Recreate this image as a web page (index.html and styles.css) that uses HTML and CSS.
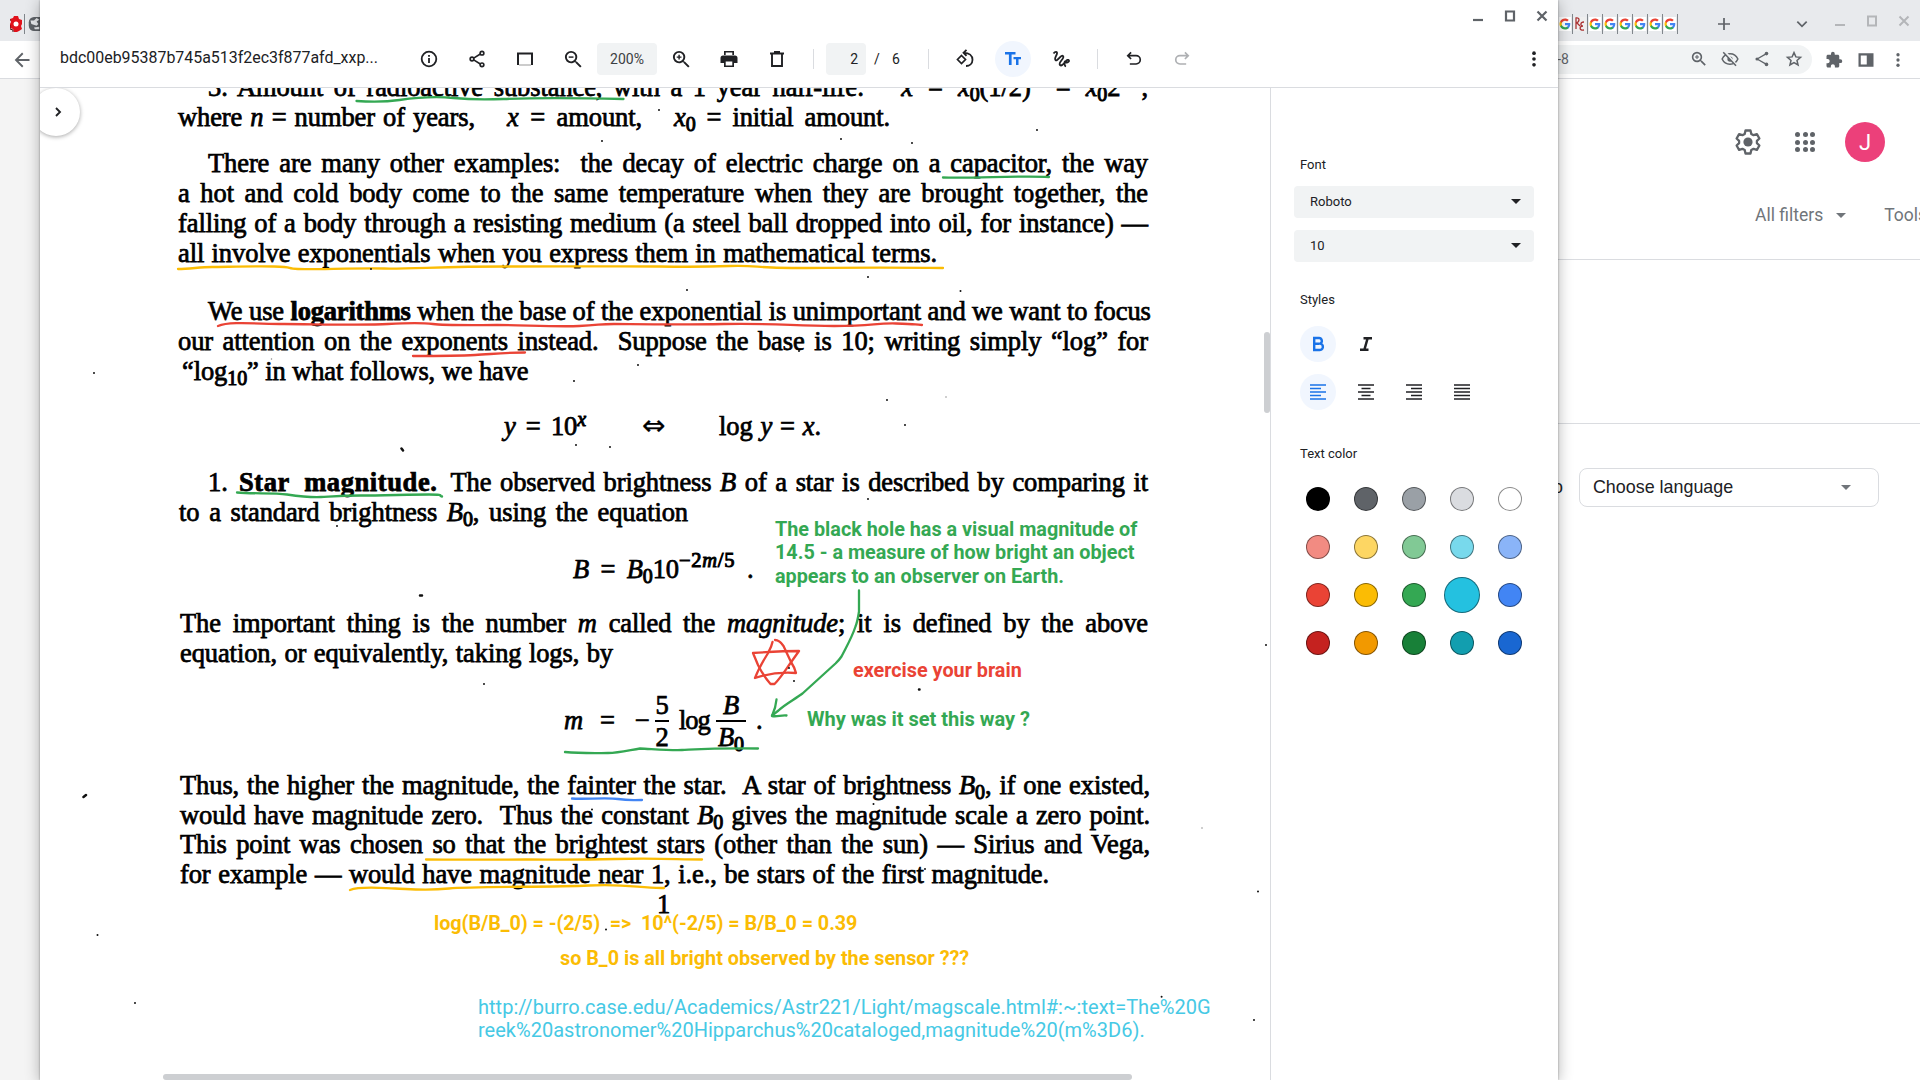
FILE: index.html
```html
<!DOCTYPE html>
<html lang="en">
<head>
<meta charset="utf-8">
<title>Gallery</title>
<link rel="stylesheet" href="styles.css">
</head>
<body>
<svg class="defs" aria-hidden="true">
  <symbol id="g" viewBox="0 0 24 24"><path fill="#4285f4" d="M22.6 12.2c0-.8-.1-1.500-.2-2.200H12v4.300h5.900c-.3 1.400-1 2.500-2.200 3.300v2.800h3.600c2.100-1.900 3.300-4.800 3.300-8.200z"/><path fill="#34a853" d="M12 23c3 0 5.500-1 7.300-2.700l-3.600-2.800c-1 .7-2.200 1.100-3.700 1.100-2.900 0-5.300-1.900-6.200-4.500H2.200v2.800C4 20.500 7.700 23 12 23z"/><path fill="#fbbc05" d="M5.800 14.100c-.2-.7-.3-1.400-.3-2.100s.1-1.400.3-2.100V7.100H2.200C1.400 8.600 1 10.200 1 12s.4 3.400 1.200 4.900z"/><path fill="#ea4335" d="M12 5.400c1.600 0 3.100.6 4.200 1.600l3.200-3.200C17.500 2.100 15 1 12 1 7.700 1 4 3.500 2.200 7.100l3.600 2.800C6.700 7.300 9.100 5.400 12 5.400z"/></symbol>
  <symbol id="share-line" viewBox="0 0 24 24"><g stroke="currentColor" stroke-width="2" fill="none"><path d="m8 11 8-5M8 13l8 5"/><circle cx="6" cy="12" r="2.200"/><circle cx="18" cy="5" r="2.200"/><circle cx="18" cy="19" r="2.200"/></g></symbol>
  <symbol id="dots" viewBox="0 0 24 24"><circle cx="12" cy="5" r="2.200"/><circle cx="12" cy="12" r="2.200"/><circle cx="12" cy="19" r="2.200"/></symbol>
  <symbol id="lens" viewBox="0 0 24 24"><path d="M15.500 14h-.79l-.28-.27A6.470 6.470 0 0 0 16 9.500 6.500 6.500 0 1 0 9.500 16c1.610 0 3.090-.59 4.230-1.570l.27.28v.79l5 4.990L20.490 19l-4.990-5zm-6 0C7.010 14 5 11.990 5 9.500S7.010 5 9.500 5 14 7.010 14 9.500 11.990 14 9.500 14z"/></symbol>
  <symbol id="undo" viewBox="0 0 24 24"><path d="M8.500 4 4.500 8l4 4M5 8h9.500a4.500 4.500 0 0 1 0 10H7" fill="none" stroke="currentColor" stroke-width="2"/></symbol>
</svg>

<div class="browser">
  <div class="tabs">
    <div class="tabs-left">
      <svg class="fav-red" viewBox="0 0 12 16"><path fill="#e0121b" d="M4 0h4l1 3 3 1v4l-1 2 1 3-3 2-2 1H4l-1-3-3-1V8l1-2-1-3 3-1z"/><circle cx="6" cy="8" r="2.500" fill="#fff"/><path d="M0 9v4l3 1v2M0 5v-2" stroke="#511" fill="none"/></svg>
      <i class="bar"></i>
      <svg class="fav-globe" viewBox="0 0 12 16"><rect width="18" height="16" rx="6" fill="#5f6368"/><path d="M2 4h4l3-3 3 2-3 2 2 3-2 2-6-2zM6 12l6-1v3H7z" fill="#e8eaed"/></svg>
    </div>
    <div class="tabs-right">
      <svg class="fav"><use href="#g"/></svg><i class="bar"></i>
      <svg class="fav fav-re" viewBox="0 0 10 14"><path d="M1 12V1c4-1 4 4 0 5M2 6l3 3M9 5c-4 0-4 4-1 4-4 0-4 5 1 4" fill="none" stroke="#a33" stroke-width="1.300"/></svg><i class="bar"></i>
      <svg class="fav"><use href="#g"/></svg><i class="bar"></i>
      <svg class="fav"><use href="#g"/></svg><i class="bar"></i>
      <svg class="fav"><use href="#g"/></svg><i class="bar"></i>
      <svg class="fav"><use href="#g"/></svg><i class="bar"></i>
      <svg class="fav"><use href="#g"/></svg><i class="bar"></i>
      <svg class="fav"><use href="#g"/></svg><i class="bar"></i>
      <svg class="tab-ico new-tab" viewBox="0 0 24 24"><path d="M12 3v18M3 12h18" stroke="#5f6368" stroke-width="2.600"/></svg>
      <svg class="tab-ico tab-search" viewBox="0 0 24 24"><path d="m4 8 8 8 8-8" fill="none" stroke="#5f6368" stroke-width="3"/></svg>
      <svg class="tab-ico dim first" viewBox="0 0 16 16"><path d="M3 12h10" stroke-width="2"/></svg>
      <svg class="tab-ico dim" viewBox="0 0 16 16"><path d="M4 3.500h8v9H4z" stroke-width="2"/></svg>
      <svg class="tab-ico dim" viewBox="0 0 16 16"><path d="m3.500 3.500 9 9m0-9-9 9" stroke-width="2"/></svg>
    </div>
  </div>
  <div class="nav">
    <svg class="back" viewBox="0 0 24 24"><path d="M22 12H4m9-9-9 9 9 9" fill="none" stroke="#5f6368" stroke-width="2.500"/></svg>
    <div class="omnibox">
      <span class="url">-8</span>
      <svg><use href="#lens"/><path d="M9.500 7v5M7 9.500h5" stroke="currentColor" stroke-width="1.300"/></svg>
      <svg viewBox="0 0 24 24"><path d="M1.500 12C3.500 7.500 7.500 5 12 5s8.500 2.500 10.500 7c-2 4.500-6 7-10.500 7S3.500 16.500 1.500 12z" fill="none" stroke="currentColor" stroke-width="2"/><circle cx="12" cy="12" r="3.500"/><path d="m5 2 16 19" stroke="#f1f3f4" stroke-width="3"/><path d="m3 3 17 18" stroke="currentColor" stroke-width="2"/></svg>
      <svg class="thin-share" viewBox="0 0 20 20"><path d="M4.500 10 15 4M4.500 10 15 16" stroke="currentColor" stroke-width="1.500"/><circle cx="4.500" cy="10" r="1.800"/><circle cx="15" cy="4" r="2"/><circle cx="15" cy="16" r="2"/></svg>
      <svg viewBox="0 0 24 24"><path d="m12 3.500 2.500 5.700 6.200.6-4.700 4.100 1.400 6.100-5.400-3.200L6.600 20 8 13.900 3.300 9.800l6.200-.6z" fill="none" stroke="currentColor" stroke-width="2"/></svg>
    </div>
    <div class="ext">
      <svg viewBox="0 0 24 24"><path d="M20.500 11H19V7c0-1.100-.9-2-2-2h-4V3.500a2.500 2.500 0 0 0-5 0V5H4c-1.100 0-1.990.9-1.990 2v3.800H3.500c1.490 0 2.700 1.210 2.700 2.700S4.990 16.200 3.500 16.200H2V20c0 1.100.9 2 2 2h3.800v-1.500c0-1.490 1.210-2.700 2.700-2.700s2.700 1.210 2.700 2.700V22H17c1.100 0 2-.9 2-2v-4h1.500a2.500 2.500 0 0 0 0-5z"/></svg>
      <svg viewBox="0 0 24 24"><path d="M3.500 4.500h17v15h-17z" fill="none" stroke="currentColor" stroke-width="3"/><path d="M13 4h7v16h-7z"/></svg>
      <svg><use href="#dots"/></svg>
    </div>
  </div>
  <div class="page">
    <div class="account">
      <svg class="gear" viewBox="0 0 26 26"><path d="M10.500 1.500h5l.8 3.400 2.300 1.300 3.300-1 2.500 4.300-2.500 2.400v2.200l2.500 2.400-2.500 4.300-3.300-1-2.300 1.300-.8 3.400h-5l-.8-3.400-2.300-1.300-3.300 1-2.500-4.300 2.500-2.400v-2.200L1.600 9.500l2.500-4.300 3.300 1 2.300-1.300z" fill="none" stroke="#5f6368" stroke-width="2.300" stroke-linejoin="round"/><circle cx="13" cy="13" r="4.600" fill="#5f6368"/></svg>
      <div class="apps"><i></i><i></i><i></i><i></i><i></i><i></i><i></i><i></i><i></i></div>
      <div class="avatar">J</div>
    </div>
    <div class="filters"><span>All filters</span><i class="tri"></i><b></b><span>Tools</span></div>
    <div class="band"></div>
    <div class="language"><span>o</span><div class="choose">Choose language<i class="tri"></i></div></div>
  </div>
</div>

<div class="window">
  <div class="titlebar">
    <svg viewBox="0 0 16 16"><path d="M3 12h10"/></svg>
    <svg viewBox="0 0 16 16"><path d="M4 3.500h8v9H4z"/></svg>
    <svg viewBox="0 0 16 16"><path d="m3.500 3.500 9 9m0-9-9 9"/></svg>
  </div>
  <div class="toolbar">
    <span class="filename">bdc00eb95387b745a513f2ec3f877afd_xxp...</span>
    <span class="tool"><svg viewBox="0 0 20 20"><circle cx="10" cy="10" r="7.300" fill="none" stroke="currentColor" stroke-width="1.800"/><path d="M9.100 9h1.800v5H9.100zM9.100 6h1.800v1.800H9.100z"/></svg></span>
    <span class="tool"><svg><use href="#share-line"/></svg></span>
    <span class="tool"><svg viewBox="0 0 20 20"><path d="M3 16V4.500h14V16" fill="none" stroke="currentColor" stroke-width="2"/><path d="M4 16h12" stroke="#999"/></svg></span>
    <span class="tool"><svg viewBox="1 1 21 21"><use href="#lens" width="24" height="24"/><path d="M7 9.500h5" stroke="currentColor" stroke-width="1.500"/></svg></span>
    <span class="zoom">200%</span>
    <span class="tool"><svg viewBox="1 1 21 21"><use href="#lens" width="24" height="24"/><path d="M9.500 7v5M7 9.500h5" stroke="currentColor" stroke-width="1.500"/></svg></span>
    <span class="tool"><svg viewBox="0 0 20 20"><path d="M5 2h10v4H5zM4 6.500h12a2.500 2.500 0 0 1 2.500 2.500v5H15v4H5v-4H1.500V9A2.500 2.500 0 0 1 4 6.500z"/><path d="M6.700 3.600h6.600V6H6.700zM6.700 12.500h6.600v4H6.700z" fill="#fff"/></svg></span>
    <span class="tool"><svg viewBox="0 0 20 20"><path d="M5 4.500h10V17H5zM3 4.500h14M7 3h6" fill="none" stroke="currentColor" stroke-width="1.900"/></svg></span>
    <i class="sep s1"></i>
    <span class="pageno">2</span><span class="slash">/</span><span class="total">6</span>
    <i class="sep s2"></i>
    <span class="tool"><svg viewBox="0 0 20 20"><path d="m6.500 6.500 4 4-4 4-4-4z" fill="none" stroke="currentColor" stroke-width="1.700"/><path d="m11.500.8-3 3 3 3M9 3.800c5 0 8.500 2.500 8.500 6.900 0 4-3 6.300-6.500 6.300" fill="none" stroke="currentColor" stroke-width="1.800"/></svg></span>
    <span class="tool active"><svg viewBox="0 0 20 20"><path d="M2 3h10.500v2.600H8.600V16H5.900V5.600H2zM10.500 8H18v2.300h-2.500V16H13v-5.700h-2.500z"/></svg></span>
    <span class="tool"><svg viewBox="0 0 20 20"><path d="M2.500 4.500C4 2.500 6.500 2 6 4.500S3 9.500 4.500 11s4-3 6-4 2.500 1 1 3-4 4.500-2.500 6 3.500-1 5-3 3.500-3 4-1.500-2 2-3.500 2M14 12c-1 2-.5 5 1 5.500" fill="none" stroke="currentColor" stroke-width="1.800"/></svg></span>
    <i class="sep s3"></i>
    <span class="tool"><svg><use href="#undo"/></svg></span>
    <span class="tool off"><svg class="flip"><use href="#undo"/></svg></span>
    <span class="tool more"><svg><use href="#dots"/></svg></span>
  </div>
  <div class="body">
    <div class="doc">
      <div class="sheet">
        <p class="p1">
          <span class="line indent"><span class="w-a1">3. Amount of radioactive substance, with a 1 year half-life:</span><span class="w-a2"><em>x</em> = <em>x</em><sub>0</sub>(1/2)<sup><em>n</em></sup> = <em>x</em><sub>0</sub>2<sup>−<em>n</em></sup>,</span></span>
          <span class="line"><span class="w-b1">where <em>n</em> = number of years,</span><span class="w-b2"><em>x</em> = amount,</span><span class="w-b3"><em>x</em><sub>0</sub> = initial amount.</span></span>
        </p>
        <p class="p2">
          <span class="line indent">There are many other examples: &nbsp;the decay of electric charge on a capacitor, the way</span>
          <span class="line">a hot and cold body come to the same temperature when they are brought together, the</span>
          <span class="line">falling of a body through a resisting medium (a steel ball dropped into oil, for instance) —</span>
          <span class="line w-terms">all involve exponentials when you express them in mathematical terms.</span>
        </p>
        <p class="p3">
          <span class="line indent">We use <b class="w-logs">logarithms</b> when the base of the exponential is unimportant and we want to focus</span>
          <span class="line">our attention on the exponents instead. &nbsp;Suppose the base is 10; writing simply “log” for</span>
          <span class="line w-log">“log<sub>10</sub>” in what follows, we have</span>
        </p>
        <div class="eq e1"><span class="w-y"><em>y</em> = 10<sup><em>x</em></sup></span><span class="w-iff">⇔</span><span class="w-logy">log <em>y</em> = <em>x</em>.</span></div>
        <p class="p4">
          <span class="line indent"><span class="w-one">1.</span><b class="w-star">Star magnitude.</b><span class="w-obs">The observed brightness <em>B</em> of a star is described by comparing it</span></span>
          <span class="line w-std">to a standard brightness <em>B</em><sub>0</sub>, using the equation</span>
        </p>
        <div class="eq e2"><span class="w-bb"><em>B</em> = <em>B</em><sub>0</sub>10</span><sup class="w-exp">−2<em>m</em>/5</sup><span>.</span></div>
        <p class="p5">
          <span class="line">The important thing is the number <em>m</em> called the <em>magnitude</em>; it is defined by the above</span>
          <span class="line w-eqv">equation, or equivalently, taking logs, by</span>
        </p>
        <div class="eq e3"><em class="w-m">m</em><span class="w-eq">=</span><span class="w-minus">−</span><span class="frac f1"><span>5</span><span>2</span></span><span class="w-lg">log</span><span class="frac f2"><em>B</em><span><em>B</em><sub>0</sub></span></span><span>.</span></div>
        <p class="p6">
          <span class="line">Thus, the higher the magnitude, the fainter the star. &nbsp;A star of brightness <em>B</em><sub>0</sub>, if one existed,</span>
          <span class="line">would have magnitude zero. &nbsp;Thus the constant <em>B</em><sub>0</sub> gives the magnitude scale a zero point.</span>
          <span class="line">This point was chosen so that the brightest stars (other than the sun) — Sirius and Vega,</span>
          <span class="line w-first">for example — would have magnitude near 1, i.e., be stars of the first magnitude.</span>
        </p>
        <div class="folio">1</div>
      </div>

      <svg class="ink" viewBox="40 88 1230 992">
        <g fill="none" stroke-width="2.300" stroke-linecap="round" stroke-linejoin="round">
          <g stroke="#34a853">
            <path d="M356.500 101c14 1 29 1 43-1s34-4 54-2 28 2 50 1 80-1 120 0"/>
            <path d="M943 177.500c30 1 76-2 106-.5"/>
            <path d="M237 492.500c18 1.500 36 0 50 2s24 3 34 2.500 20-1.500 40-1.500 50-1 68-1 8 1 13 2"/>
            <path d="M565 752c16 1.500 32 1 43 1s22-3 32-4.500c12 .5 30 2 42 1.500s30-2 76-1.500"/>
            <path d="M859 590.500v21c-1 6-1.500 10-3.500 15-4 12-9 20-14 30-2 3-3 4-6 7l-33 30c-8 6-18 11-24 17l-6.500 5"/>
            <path d="M776.500 699.500c-.5 6-2 11-4.500 16.500 5 1 9-1 14.500-.5"/>
          </g>
          <g stroke="#fbbc04">
            <path d="M178 269c12 0 22-2 34-2s40-1 62-.5 10 2 24 2.500 60-1 86-.5 60-2 120-2 130-.5 156 0 44 .5 70-.5 26 2 62 2 80-1 151 0"/>
            <path d="M426 859.500c40 .5 70 0 100 0s45 .5 90-.5 60 .5 86 .5"/>
            <path d="M350 890c10-4 30-2 45-1.500s30 2.500 54 0 100-1 140-3 50 3 75 2.500"/>
          </g>
          <g stroke="#ea4335">
            <path d="M218 326c12-5 40-2 66-2s80 1.500 104 0 34-1.500 45 0 40 1 64 1 60 2 82 1 20-2 35-2 60 1 110 0 70 2 110 2 40-3 62-2.500 16 1 26 1.500"/>
            <path d="M413 356c20 0 44 0 62-1s30-2.500 50-2.500"/>
            <path d="M772.500 642c-1 5-3 8-5 12-5 8-9 15-12.500 24 12-4 28-6 41-5-1-4-3-8-5-11l-7.500-16c-2-3-5-6-8.500-6"/>
            <path d="M799 651c-16 0-31 1-46 2l5 12c4 8 7 13 12.500 19h4c6-6 11-14 16-21l8.500-12z"/>
          </g>
          <path stroke="#4285f4" d="M572 798.500c10 1 36-1 46 .5s12 1 24 1"/>
        </g>
        <path d="M659 110h0M602 141h0M841 139h0M912 143h0M1037 130h0M371 269h0M638 365h0M574 381h0M868 277h0M687 290h0M960.500 291h0M799 351h0M576 445h0M610 447h0M337 526h0M484 684h0M887 400h0M905 425h0M868 499h0M794 681h0M789 668h0M1266 645h0M97.500 935h0M135 1003h0M94 373h0M873.500 804h0M1258 891.500h0M1161.600 996.700h0M1254 1020h0M592 809.500h0M925 869h0M606 929.500h0" stroke="#111" stroke-width="2" stroke-linecap="round"/>
        <path d="M401.500 448.500l1.500 2M420 595.500h2M919 689.500h.5M83.500 797l2.500-2" stroke="#111" stroke-width="2.500" stroke-linecap="round"/>
        <path d="M946 397h0M1202 828h0M271.500 359h0" stroke="#888" stroke-width="1.500" stroke-linecap="round"/>
      </svg>

      <div class="note green n1">The black hole has a visual magnitude of<br>14.5 - a measure of how bright an object<br>appears to an observer on Earth.</div>
      <div class="note red n2">exercise your brain</div>
      <div class="note green n3">Why was it set this way ?</div>
      <div class="note yellow n4">log(B/B_0) = -(2/5)&nbsp; =&gt;&nbsp; 10^(-2/5) = B/B_0 = 0.39</div>
      <div class="note yellow n5">so B_0 is all bright observed by the sensor ???</div>
      <div class="note cyan n6">http://burro.case.edu/Academics/Astr221/Light/magscale.html#:~:text=The%20G<br>reek%20astronomer%20Hipparchus%20cataloged,magnitude%20(m%3D6).</div>

      <div class="drawer"><svg viewBox="0 0 24 24"><path d="m9 6 6 6-6 6" fill="none" stroke="#202124" stroke-width="2.800"/></svg></div>
      <div class="thumb-v"></div>
      <div class="thumb-h"></div>
    </div>
    <div class="panel">
      <h2>Font</h2>
      <div class="select">Roboto<i class="tri"></i></div>
      <div class="select">10<i class="tri"></i></div>
      <h2 class="h-styles">Styles</h2>
      <div class="opts">
        <span class="opt on"><svg viewBox="0 0 20 20"><path d="M6.200 4h4.500a2.900 2.900 0 0 1 1.500 5.500A3.100 3.100 0 0 1 11 16H6.200z M6.200 9.700h5" fill="none" stroke="currentColor" stroke-width="2.400"/></svg></span>
        <span class="opt"><svg viewBox="0 0 20 20"><path d="M7.500 4.200H16M4 15.800h8.500M11.700 4 8.300 16" fill="none" stroke="currentColor" stroke-width="2.500"/></svg></span>
      </div>
      <div class="opts">
        <span class="opt on"><svg viewBox="0 0 16 16"><path d="M0 1h16M0 4.500h11M0 8h16M0 11.500h11M0 15h16"/></svg></span>
        <span class="opt"><svg viewBox="0 0 16 16"><path d="M0 1h16M3.500 4.500h9M0 8h16M3.500 11.500h9M0 15h16"/></svg></span>
        <span class="opt"><svg viewBox="0 0 16 16"><path d="M0 1h16M5 4.500h11M0 8h16M5 11.500h11M0 15h16"/></svg></span>
        <span class="opt"><svg viewBox="0 0 16 16"><path d="M0 1h16M0 4.500h16M0 8h16M0 11.500h16M0 15h16"/></svg></span>
      </div>
      <h2 class="h-color">Text color</h2>
      <div class="swatches">
        <i class="c1"></i><i class="c2"></i><i class="c3"></i><i class="c4"></i><i class="c5"></i>
        <i class="c6"></i><i class="c7"></i><i class="c8"></i><i class="c9"></i><i class="c10"></i>
        <i class="c11"></i><i class="c12"></i><i class="c13"></i><i class="c14 picked"></i><i class="c15"></i>
        <i class="c16"></i><i class="c17"></i><i class="c18"></i><i class="c19"></i><i class="c20"></i>
      </div>
    </div>
  </div>
</div>
</body>
</html>
```
FILE: styles.css
```css
* { box-sizing: border-box; }
body { margin: 0; width: 1920px; height: 1080px; overflow: hidden; position: relative; background: #fff; font-family: Roboto, sans-serif; color: #202124; }
svg { fill: currentColor; display: block; flex: none; }
i { font-style: normal; }
.defs { position: absolute; width: 0; height: 0; }
.tri { width: 0; height: 0; border: 5px solid transparent; border-top-color: currentColor; border-bottom: 0; }

/* browser behind */
.browser { display: flex; flex-direction: column; height: 1080px; color: #5f6368; }
.tabs { height: 41px; background: #e8eaed; display: flex; justify-content: space-between; padding-top: 7px; }
.tabs-left, .tabs-right { display: flex; align-items: center; height: 34px; }
.tabs-left { padding-left: 10px; }
.bar { width: 1px; height: 20px; background: #80868b; flex: none; }
.fav-red { width: 12px; height: 16px; margin-right: 2px; }
.fav-globe { width: 12px; height: 14px; margin-left: 3px; }
.tabs-right { width: 362px; }
.fav { width: 12px; height: 14px; margin: 0 1px 0 1px; background: #fff; }
.fav-re { background: #eee; }
.tab-ico { width: 16px; height: 16px; }
.new-tab { margin-left: 38px; }
.tab-search { width: 14px; height: 14px; margin-left: 63px; }
.dim { fill: none; stroke: #b4b6b9; margin: 0 0 6px 16px; }
.dim.first { margin-left: 23px; }
.nav { height: 38px; border-bottom: 1px solid #dadce0; display: flex; align-items: center; background: #fff; }
.back { width: 18px; height: 18px; margin-left: 13px; }
.omnibox { width: 1757px; margin-left: 24px; height: 29px; border-radius: 15px; background: #f1f3f4; display: flex; align-items: center; justify-content: flex-end; gap: 14px; padding-right: 9px; margin-top: -1px; }
.omnibox svg { width: 18px; height: 18px; overflow: visible; }
.omnibox svg:nth-of-type(1) { width: 24px; height: 24px; transform: scale(.8); margin-right: -4px; transform-origin: 12px 12px; }
.url { margin-right: 104px; font-size: 14px; }
.ext { display: flex; gap: 14px; padding-left: 13px; }
.ext svg { width: 18px; height: 18px; }
.page { flex: 1; display: flex; flex-direction: column; align-items: flex-end; background: linear-gradient(90deg, #f4f4f4 40px, #fff 40px); }
.account { display: flex; align-items: center; height: 40px; margin-top: 43px; padding-right: 35px; }
.gear { width: 26px; height: 26px; }
.apps { display: grid; grid-template-columns: repeat(3, 5px); gap: 2.500px; margin-left: 34px; }
.apps i { width: 5px; height: 5px; border-radius: 50%; background: #5f6368; }
.avatar { width: 40px; height: 40px; border-radius: 50%; background: #ec407a; color: #fff; font-size: 22px; display: flex; align-items: center; justify-content: center; margin-left: 30px; }
.filters { display: flex; align-items: center; width: 165px; height: 26px; margin-top: 40px; font-size: 17.500px; color: #70757a; white-space: nowrap; }
.filters span:last-child { margin-left: 15px; }
.filters .tri { margin-left: 13px; }
.filters b { width: 1px; height: 25px; background: #dadce0; margin-left: 23px; }
.band { width: 362px; height: 165px; border: solid #dadce0; border-width: 1px 0; margin-top: 31px; }
.language { display: flex; align-items: center; width: 367px; margin-top: 44px; font: 17.900px "Liberation Sans", sans-serif; color: #202124; }
.choose { width: 300px; height: 39px; border: 1px solid #dadce0; border-radius: 8px; margin-left: 16px; padding: 0 27px 0 13px; display: flex; align-items: center; justify-content: space-between; }
.choose .tri { color: #70757a; }

/* viewer window */
.window { position: absolute; left: 40px; top: 0; width: 1518px; height: 1080px; background: #fff; box-shadow: 0 2px 14px rgba(0,0,0,.3), 0 0 2px rgba(0,0,0,.35); display: flex; flex-direction: column; }
.titlebar { height: 32px; display: flex; justify-content: flex-end; align-items: center; gap: 16px; padding-right: 8px; }
.titlebar svg { width: 16px; height: 16px; fill: none; stroke: #5f6368; stroke-width: 2.200; }
.toolbar { height: 56px; border-bottom: 1px solid #dadce0; display: flex; align-items: center; padding: 0 6px 2px 20px; }
.filename { font-size: 15.950px; width: 351px; white-space: nowrap; padding-bottom: 3px; }
.tool { width: 36px; height: 36px; margin-right: 12px; border-radius: 50%; display: flex; align-items: center; justify-content: center; flex: none; }
.tool svg { width: 20px; height: 20px; }
.tool.active { background: #f1f6fe; color: #1a73e8; }
.tool.off { color: #aeb0b3; }
.flip { transform: scaleX(-1); }
.tool.more { margin: 0 0 0 auto; }
.zoom { width: 60px; height: 32px; margin: 0 6px; background: #f1f3f4; border-radius: 4px; font-size: 14px; display: flex; align-items: center; justify-content: center; flex: none; color: #3c4043; }
.tool + .zoom { margin-left: -6px; }
.sep { width: 1px; height: 20px; background: #dadce0; flex: none; }
.s1 { margin-left: 6px; }
.pageno { width: 40px; height: 32px; margin-left: 12px; padding-right: 8px; background: #f1f3f4; border-radius: 4px; display: flex; align-items: center; justify-content: flex-end; font-size: 14px; flex: none; }
.slash, .total { font-size: 14px; }
.slash { margin-left: 8px; width: 18px; }
.total { width: 36px; }
.s2 { margin-right: 18px; }
.s3 { margin: 0 18px 0 6px; }
.body { flex: 1; display: flex; min-height: 0; }
.doc { width: 1230px; position: relative; overflow: hidden; }

/* scanned sheet */
.sheet { width: 1110px; padding-left: 138px; font: 26.500px/30px "Liberation Serif", "DejaVu Sans", serif; letter-spacing: -.1px; color: #000; -webkit-text-stroke: .75px #000; }
.sheet p { margin: 0; width: 970px; }
.line, .line > span, .w-star { display: block; text-align-last: justify; white-space: nowrap; }
.line { height: 30px; }
.line:has(> span) { display: flex; }
.indent { margin-left: 30px; }
.sheet sub, .sheet sup { font-size: 20px; line-height: 0; -webkit-text-stroke-width: 1px; }
.sheet sub { vertical-align: -5px; }
.sheet sup { vertical-align: 9px; }
.sheet .p1 { margin-top: -16px; }
.sheet .p2 { margin-top: 16px; }
.sheet .p3 { margin-top: 28px; }
.sheet .p4 { margin-top: 26px; }
.sheet .p5 { margin-top: 24px; }
.sheet .p6 { margin: 36px 0 0 2px; line-height: 29.600px; }
.p6 .line { height: 29.600px; }
.w-a1 { width: 657px; }
.w-a2 { width: 247px; margin-left: 37px; }
.w-b1 { width: 297px; }
.w-b2 { width: 135px; margin-left: 32px; }
.w-b3 { width: 216px; margin-left: 32px; }
.w-terms { width: 759px; }
.w-logs { letter-spacing: -.2px; }
.w-log { width: 342px; margin-left: 4px; }
.w-one { width: 20px; }
.w-star { width: 199px; margin-left: 11px; letter-spacing: .6px; }
.w-obs { width: 699px; margin-left: 13px; }
.w-std { width: 509px; margin-left: 1px; }
.w-eqv { width: 433px; }
.w-first { width: 869px; }
.p5 { padding-left: 2px; }
.eq { display: flex; height: 30px; align-items: center; white-space: nowrap; }
.eq > * { text-align-last: justify; flex: none; }
.e1 { margin: 25px 0 0 326px; }
.w-y { width: 82px; }
.w-iff { width: 23px; margin-left: 56px; font: 28px/30px "DejaVu Sans", sans-serif; -webkit-text-stroke-width: .3px; }
.w-logy { width: 102px; margin-left: 54px; }
.e2 { margin: 27px 0 0 395px; }
.w-bb { width: 106px; }
.sheet .w-exp { width: 60px; margin: -18px 8px 0 0; letter-spacing: .7px; font-size: 20.500px; }
.e3 { margin: 37px 0 0 386px; }
.w-m { width: 22px; }
.w-eq { width: 20px; margin-left: 14px; }
.w-minus { width: 18px; margin-left: 15px; }
.frac { display: flex; flex-direction: column; align-items: center; margin-top: 1px; }
.frac > :first-child { height: 32px; border-bottom: 2px solid #000; text-align: center; text-align-last: center; }
.f1 { width: 14px; margin-left: 2px; }
.f1 > :first-child { width: 14px; }
.w-lg { width: 31px; margin-left: 10px; letter-spacing: -1px; }
.f2 { width: 30px; margin: 1px 10px 0 6px; }
.f2 > :first-child { width: 30px; }
.folio { padding-left: 479px; }

/* annotations */
.ink { position: absolute; left: 0; top: 0; width: 1230px; height: 992px; }
.note { position: absolute; font-size: 19.800px; line-height: 23.400px; white-space: nowrap; font-weight: 700; }
.green { color: #34a853; }
.red { color: #ea4335; }
.yellow { color: #fbbc04; }
.cyan { color: #46c9e5; font-weight: 400; }
.n1 { left: 735px; top: 430px; }
.n2 { left: 813px; top: 571px; }
.n3 { left: 767px; top: 620px; font-size: 20px; }
.n4 { left: 394px; top: 824px; letter-spacing: -.06px; }
.n5 { left: 520px; top: 859px; }
.n6 { left: 438px; top: 908px; font-size: 20px; letter-spacing: .02px; }
.drawer { position: absolute; left: -8px; top: 0; width: 48px; height: 48px; border-radius: 50%; background: #fff; box-shadow: 0 1px 4px rgba(0,0,0,.35); display: flex; align-items: center; justify-content: center; }
.drawer svg { width: 16px; height: 16px; margin-left: 3px; }
.thumb-v { position: absolute; right: 0; top: 244px; width: 6px; height: 81px; border-radius: 3px; background: #cdcfd2; }
.thumb-h { position: absolute; left: 123px; bottom: 0; width: 969px; height: 6px; border-radius: 3px; background: #cdcfd2; }

/* side panel */
.panel { width: 288px; border-left: 1px solid #dadce0; padding: 67px 24px 0 23px; }
.panel h2 { margin: 0 0 12px 6px; font-size: 13px; line-height: 19px; font-weight: 400; }
.select { height: 32px; margin-bottom: 12px; padding: 0 13px 1px 16px; background: #f1f3f4; border-radius: 4px; font-size: 13px; display: flex; align-items: center; justify-content: space-between; }
.panel .h-styles { margin-top: 28px; margin-bottom: 17px; }
.opts { display: flex; gap: 12px; margin: 0 0 12px 6px; }
.opt { width: 36px; height: 36px; border-radius: 50%; display: flex; align-items: center; justify-content: center; }
.opt.on { background: #f1f6fe; color: #1a73e8; }
.opt svg { width: 20px; height: 20px; }
.opt svg[viewBox="0 0 16 16"] { width: 16px; height: 16px; stroke: currentColor; stroke-width: 1.500; }
.panel .h-color { margin-top: 34px; margin-bottom: 24px; }
.swatches { display: grid; grid-template-columns: repeat(5, 48px); grid-auto-rows: 48px; place-items: center; margin-top: -12px; }
.swatches i { width: 24px; height: 24px; border-radius: 50%; border: 1px solid rgba(0,0,0,.45); }
.swatches .picked { width: 36px; height: 36px; }
.c1 { background: #000; } .c2 { background: #5f6368; } .c3 { background: #9aa0a6; } .c4 { background: #dadce0; } .c5 { background: #fff; }
.c6 { background: #f28b82; } .c7 { background: #fdd663; } .c8 { background: #81c995; } .c9 { background: #78d9ec; } .c10 { background: #8ab4f8; }
.c11 { background: #ea4335; } .c12 { background: #fbbc04; } .c13 { background: #34a853; } .c14 { background: #24c1e0; } .c15 { background: #4285f4; }
.c16 { background: #c5221f; } .c17 { background: #f29900; } .c18 { background: #188038; } .c19 { background: #129eaf; } .c20 { background: #1967d2; }
```
